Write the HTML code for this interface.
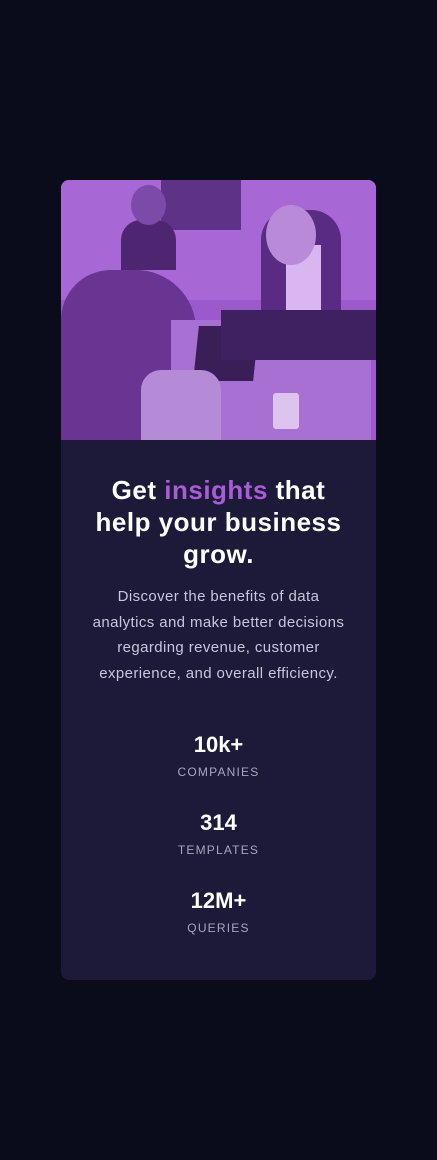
<!DOCTYPE html>
<html><head><meta charset="utf-8"><style>
body{margin:0;background:#0a0c1c;width:437px;height:1160px;font-family:"Liberation Sans",sans-serif;}
.card{position:absolute;left:61px;top:180px;width:315px;height:800px;background:#1c1a38;border-radius:8px;overflow:hidden;text-align:center}
.img{position:relative;height:260px;background:#9a5acb;overflow:hidden}
.img div{position:absolute}
h1{margin:0;position:absolute;top:294px;left:0;width:315px;color:#fff;font-size:26px;line-height:32px;font-weight:bold;white-space:nowrap;letter-spacing:0.5px}
h1 span{color:#a95cd8}
p{margin:0;position:absolute;top:404px;left:0;width:315px;color:#c9c5dc;font-size:15px;line-height:25.5px;white-space:nowrap;letter-spacing:0.4px}
.s{position:absolute;left:0;width:315px}
.n{color:#fff;font-size:22px;font-weight:bold;line-height:26px}
.l{color:#a8a6bc;font-size:12px;letter-spacing:1.2px;margin-top:7px}
</style></head><body>
<div class="card">
<div class="img">
<div style="left:0;top:0;width:315px;height:120px;background:#a767d4"></div>
<div style="left:100px;top:0;width:80px;height:50px;background:#5e3286"></div>
<div style="left:60px;top:40px;width:55px;height:50px;background:#4d2570;border-radius:20px 20px 0 0"></div>
<div style="left:70px;top:5px;width:35px;height:40px;background:#7c4aa8;border-radius:50%"></div>
<div style="left:200px;top:30px;width:80px;height:120px;background:#5a2b82;border-radius:30px 30px 0 0"></div>
<div style="left:225px;top:65px;width:35px;height:70px;background:#d9b6f0"></div>
<div style="left:205px;top:25px;width:50px;height:60px;background:#b98ad8;border-radius:50%"></div>
<div style="left:0;top:90px;width:135px;height:170px;background:#6a3592;border-radius:50px 60px 0 0"></div>
<div style="left:110px;top:140px;width:200px;height:120px;background:#a770d2"></div>
<div style="left:135px;top:146px;width:60px;height:55px;background:#3a1e58;transform:skewX(-6deg)"></div>
<div style="left:160px;top:130px;width:155px;height:50px;background:#3f2060"></div>
<div style="left:212px;top:213px;width:26px;height:36px;background:#dcc4ee;border-radius:3px"></div>
<div style="left:80px;top:190px;width:80px;height:70px;background:#b58ad6;border-radius:20px 20px 0 0"></div>
</div>
<h1>Get <span>insights</span> that<br>help your business<br>grow.</h1>
<p>Discover the benefits of data<br>analytics and make better decisions<br>regarding revenue, customer<br>experience, and overall efficiency.</p>
<div class="s" style="top:552px"><div class="n">10k+</div><div class="l">COMPANIES</div></div>
<div class="s" style="top:630px"><div class="n">314</div><div class="l">TEMPLATES</div></div>
<div class="s" style="top:708px"><div class="n">12M+</div><div class="l">QUERIES</div></div>
</div>
</body></html>
